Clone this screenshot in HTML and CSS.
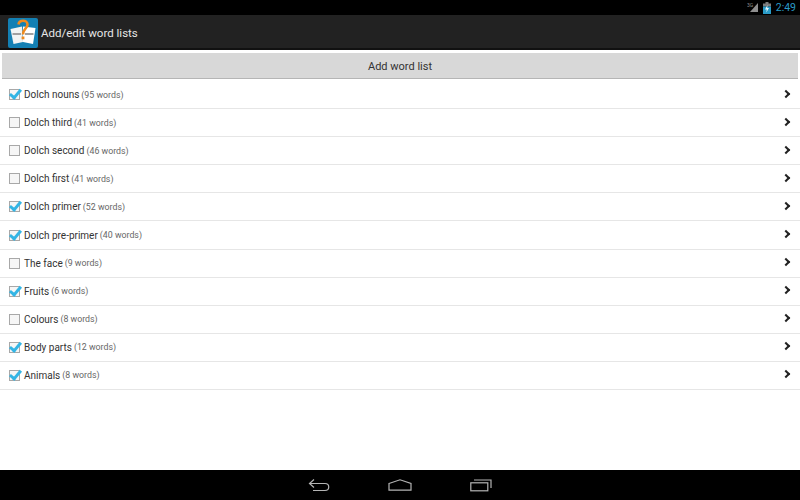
FILE: index.html
```html
<!DOCTYPE html>
<html lang="en">
<head>
    <meta charset="UTF-8" />
    <title>Add/edit word lists</title>
    <link rel="stylesheet" href="styles.css">
</head>
<body>

<div class="status-bar">
    <svg class="signal" width="12" height="10" viewBox="0 0 12 10">
        <text x="0" y="4" class="signal-label">3G</text>
        <polygon points="11,0 11,9 3,9" fill="#8f8f8f" />
    </svg>
    <svg class="battery" width="8" height="12" viewBox="0 0 8 12">
        <rect x="2.5" y="0" width="3" height="2" fill="#7c7c7c" />
        <rect x="0" y="1.5" width="8" height="3" fill="#7c7c7c" />
        <rect x="0" y="4.5" width="8" height="7.5" fill="#2a9bc7" />
        <polygon points="4.5,3 2,7.5 3.8,7.5 3.3,10.5 6,6 4.2,6" fill="#e8f7fc" />
    </svg>
    <span class="clock">2:49</span>
</div>

<header class="action-bar">
    <svg class="app-icon" width="30" height="30" viewBox="0 0 30 30">
        <rect width="30" height="30" rx="2" fill="#1380b4" />
        <polygon points="2.5,11 14,8.5 15,24 5.5,26" fill="#f1f4f4" />
        <polygon points="15,8.5 27.5,10 25,26 15,24" fill="#ffffff" />
        <rect x="4.5" y="15" width="8.5" height="2" fill="#a0a0a0" />
        <rect x="17" y="15" width="8.5" height="2" fill="#a0a0a0" />
        <path d="M10.5 6.5 C11 1.5 19.5 1.5 19.5 6.5 C19.5 10.5 15 10.5 15 16.5" fill="none" stroke="#f08a1d" stroke-width="2.6" />
        <rect x="13.6" y="18.5" width="2.8" height="2.8" fill="#f08a1d" />
    </svg>
    <h1>Add/edit word lists</h1>
</header>

<main>
    <button class="add-button" type="button">Add word list</button>

    <ul class="word-lists">
        <li class="row"><span class="box checked"></span><span class="name">Dolch nouns</span><span class="count">(95 words)</span><span class="chevron"></span></li>
        <li class="row"><span class="box"></span><span class="name">Dolch third</span><span class="count">(41 words)</span><span class="chevron"></span></li>
        <li class="row"><span class="box"></span><span class="name">Dolch second</span><span class="count">(46 words)</span><span class="chevron"></span></li>
        <li class="row"><span class="box"></span><span class="name">Dolch first</span><span class="count">(41 words)</span><span class="chevron"></span></li>
        <li class="row"><span class="box checked"></span><span class="name">Dolch primer</span><span class="count">(52 words)</span><span class="chevron"></span></li>
        <li class="row"><span class="box checked"></span><span class="name">Dolch pre-primer</span><span class="count">(40 words)</span><span class="chevron"></span></li>
        <li class="row"><span class="box"></span><span class="name">The face</span><span class="count">(9 words)</span><span class="chevron"></span></li>
        <li class="row"><span class="box checked"></span><span class="name">Fruits</span><span class="count">(6 words)</span><span class="chevron"></span></li>
        <li class="row"><span class="box"></span><span class="name">Colours</span><span class="count">(8 words)</span><span class="chevron"></span></li>
        <li class="row"><span class="box checked"></span><span class="name">Body parts</span><span class="count">(12 words)</span><span class="chevron"></span></li>
        <li class="row"><span class="box checked"></span><span class="name">Animals</span><span class="count">(8 words)</span><span class="chevron"></span></li>
    </ul>
</main>

<nav class="nav-bar">
    <svg width="22" height="14" viewBox="0 0 22 14" fill="none" stroke="#b4b4b4" stroke-width="1.2">
        <path d="M6 1.5 L1.5 5.5 L6 9.5" />
        <path d="M1.5 5.5 H17 C22 5.5 22 12.5 17 12.5 H5" />
    </svg>
    <svg width="24" height="12" viewBox="0 0 24 12" fill="none" stroke="#b4b4b4" stroke-width="1.2">
        <path d="M1 4.5 L12 0.8 L23 4.5 V11.2 H1 Z" />
    </svg>
    <svg width="22" height="14" viewBox="0 0 22 14" fill="none" stroke="#b4b4b4" stroke-width="1.2">
        <rect x="0.8" y="4.8" width="17" height="8" />
        <path d="M4 2 H21 V10" />
    </svg>
</nav>

</body>
</html>
```

FILE: styles.css
```css
html, body {
    height: 100%;
}

body {
    margin: 0;
    display: flex;
    flex-direction: column;
    height: 500px;
    overflow: hidden;
    background: #fff;
    font-family: Roboto, "Liberation Sans", sans-serif;
    color: #333;
}

.status-bar {
    height: 15px;
    flex: none;
    background: #000;
    display: flex;
    align-items: center;
    justify-content: flex-end;
    padding-right: 4px;
}

.signal-label {
    font-family: Roboto, sans-serif;
    font-size: 5px;
    fill: #8f8f8f;
}

.battery {
    margin: 0 5px 0 4px;
}

.clock {
    font-size: 10.5px;
    color: #2a9bc7;
}

.action-bar {
    height: 35px;
    flex: none;
    box-sizing: border-box;
    background: #222;
    border-bottom: 2px solid #111;
    display: flex;
    align-items: center;
    padding: 3px 0 0 8px;
}

.action-bar h1 {
    margin: 0 0 0 3px;
    font-size: 11.5px;
    font-weight: 400;
    color: #e6e6e6;
}

main {
    flex: 1;
    padding-top: 3px;
}

.add-button {
    display: block;
    box-sizing: border-box;
    width: 796px;
    height: 26px;
    margin: 0 2px;
    padding: 2px 0 0;
    border: none;
    border-bottom: 1px solid #b5b5b5;
    background: #d8d8d8;
    color: #333;
    font-family: inherit;
    font-size: 11px;
}

.word-lists {
    list-style: none;
    margin: 2px 0 0;
    padding: 0;
}

.row {
    box-sizing: border-box;
    height: 28.1px;
    padding: 0 9px;
    display: flex;
    align-items: center;
    border-bottom: 1px solid #e6e6e6;
    font-size: 10px;
}

.box {
    position: relative;
    box-sizing: border-box;
    width: 11px;
    height: 11px;
    margin-right: 4px;
    border: 1px solid #a8a8a8;
    background: #f6f6f6;
}

.box.checked::after {
    content: "";
    position: absolute;
    left: 2px;
    top: -3px;
    width: 4px;
    height: 9px;
    border-right: 3px solid #33b5e5;
    border-bottom: 3px solid #33b5e5;
    transform: rotate(40deg);
}

.count {
    margin-left: 2px;
    font-size: 8.8px;
    color: #666;
}

.chevron {
    width: 4px;
    height: 4px;
    margin: 0 2px 2px auto;
    border-top: 2px solid #222;
    border-right: 2px solid #222;
    transform: rotate(45deg);
}

.nav-bar {
    height: 30px;
    flex: none;
    background: #000;
    display: flex;
    align-items: center;
    justify-content: center;
    gap: 58px;
}
```
